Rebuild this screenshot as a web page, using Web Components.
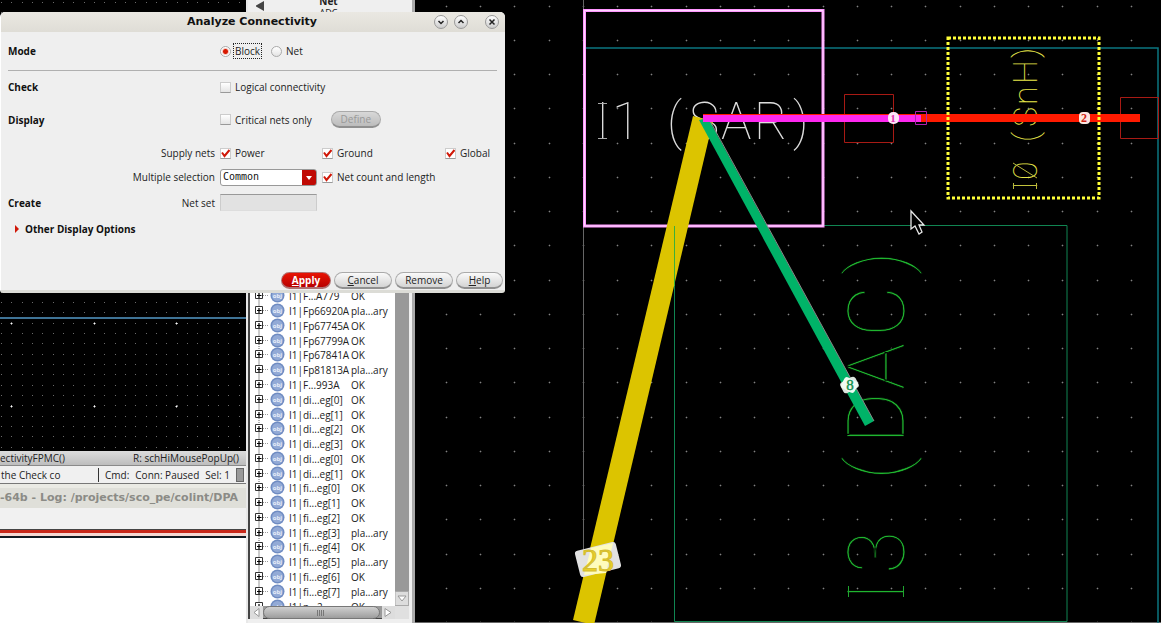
<!DOCTYPE html>
<html lang="en">
<head>
<meta charset="utf-8">
<title>Analyze Connectivity</title>
<style>
html, body { margin: 0; height: 100%; background: #000; }
body { font: 10px/14px "Open Sans", sans-serif; color: #222; overflow: hidden; }
</style>
</head>
<body>
<eda-desktop></eda-desktop>
<script>
const define = (name, html, setup) => {
  const template = document.createElement('template');
  template.innerHTML = html;
  customElements.define(name, class extends HTMLElement {
    constructor() {
      super();
      this.attachShadow({ mode: 'open' }).append(template.content.cloneNode(true));
    }
    connectedCallback() {
      if (setup && !this.ready) { this.ready = true; setup(this, this.shadowRoot); }
    }
  });
};

/* Square grid of dots as one path */
const dots = (x0, y0, step, cols, rows) => {
  let d = '';
  for (let j = 0; j < rows; j++)
    for (let i = 0; i < cols; i++)
      d += `M${Math.round(x0 + i * step)} ${Math.round(y0 + j * step)}h1v1h-1z`;
  return d;
};

/* Left: schematic editor */
define('schematic-pane', `
<style>
:host { display: block; background: #000; overflow: hidden; min-height: 0; }
svg { display: block; width: 100%; height: 100%; }
</style>
<svg aria-hidden="true">
  <path id="fine" fill="#6a6a6a"/>
  <path stroke="#3f7396" stroke-width="2" d="M0 318h4000"/>
  <path id="coarse" fill="#fff" stroke="#fff" stroke-width="1"/>
</svg>`, (el, root) => {
  root.getElementById('fine').setAttribute('d', dots(1, 2, 10.34, 24, 44));
  root.getElementById('coarse').setAttribute('d', dots(11, 323, 82.7, 3, 2));
});

define('mouse-bar', `
<style>
:host { display: flex; justify-content: space-between; height: 14px; padding-right: 7px;
  background: linear-gradient(#dcdcdc, #bdbdbd); border-bottom: 1px solid #8a8a8a; white-space: nowrap; }
</style>
<slot></slot>`);

define('status-bar', `
<style>
:host { display: flex; align-items: center; height: 17px; background: #f0f0f0; white-space: nowrap;
  border-bottom: 1px solid #777; }
.message { width: 97px; padding-left: 1px; }
.info { display: flex; gap: 6px; flex: 1; border-left: 1px solid #333; padding-left: 6px; }
.grip { width: 6px; height: 12px; background: #999; border: 1px solid #666; margin-right: 2px; }
</style>
<div class="message"><slot name="message"></slot></div>
<div class="info"><slot></slot></div>
<div class="grip"></div>`);

define('log-window', `
<style>
:host { display: flex; flex-direction: column; height: 139px; background: #fff; overflow: hidden; }
.title { height: 20px; margin-top: 4px; background: #dfdfd9; color: #8b8b86; white-space: nowrap;
  font: bold 11px/20px "DejaVu Sans", sans-serif; }
.gap { height: 4px; background: #eaeae4; margin-bottom: -4px; }
.menu { height: 21px; background: #f1f1f1; }
.rule { height: 3px; background: #c8281a; border-top: 1px solid #444; border-bottom: 3px solid #f6d8d2; }
.edge { height: 2px; background: #111a22; }
</style>
<div class="gap"></div><div class="title"><slot></slot></div>
<div class="menu"></div><div class="rule"></div><div class="edge"></div>`);

/* Middle: object browser */
define('object-icon', `
<style>
:host { display: inline-block; width: 36px; height: 14px; padding-left: 1px; vertical-align: top; }
svg { display: block; overflow: visible; }
text { font: bold 6px "Open Sans", sans-serif; fill: #e8eefa; text-anchor: middle; }
</style>
<svg width="36" height="14">
  <path d="M8 -4v22M12 6.500h6" stroke="#999" stroke-dasharray="1 1" fill="none"/>
  <path d="M4.500 2.500h7v7h-7z" fill="#fff" stroke="#333"/>
  <path d="M6 6.500h4.500M8 4v5" stroke="#000" stroke-width="1.200"/>
  <circle cx="26.500" cy="6.500" r="7" fill="#6f8cc2"/>
  <circle cx="26.500" cy="6.500" r="5.500" fill="#93aad6"/>
  <text x="26.500" y="9">obj</text>
</svg>`);

define('object-tree', `
<style>
:host { display: block; background: #fff; overflow: hidden; min-height: 0; }
table { border-collapse: collapse; width: 100%; height: 325px; table-layout: fixed; }
td { padding: 0; height: 14px; white-space: nowrap; vertical-align: middle; line-height: 14px; }
.icon { width: 39px; }
.name { width: 62px; }
</style>
<table aria-label="Objects"><tbody></tbody></table>`, (el, root) => {
  const P = 'pla...ary';
  const rows = [['F...A779'], ['Fp66920A', P], ['Fp67745A'], ['Fp67799A'], ['Fp67841A'], ['Fp81813A', P],
    ['F...993A'], ['di...eg[0]'], ['di...eg[1]'], ['di...eg[2]'], ['di...eg[3]'], ['di...eg[0]'], ['di...eg[1]'],
    ['fi...eg[0]'], ['fi...eg[1]'], ['fi...eg[2]'], ['fi...eg[3]', P], ['fi...eg[4]'], ['fi...eg[5]', P],
    ['fi...eg[6]'], ['fi...eg[7]', P], ['p...2']];
  root.querySelector('tbody').innerHTML = rows.map(([n, s = 'OK']) =>
    `<tr><td class="icon"><object-icon></object-icon></td><td class="name">I1|${n}</td><td>${s}</td></tr>`).join('');
});

define('object-browser', `
<style>
:host { display: flex; background: #efefef; overflow: hidden; border-left: 2px solid #e8e8e8; box-sizing: border-box; }
.main { flex: 1; display: flex; flex-direction: column; min-width: 0; }
.head { height: 24px; display: grid; grid-template-columns: 24px 1fr 24px; align-items: end; text-align: center;
  line-height: 12px; margin: -5px 0 270px; }
.head strong, .head span { display: block; }
.head span { font-size: 9px; }
.head svg { align-self: center; justify-self: end; margin-bottom: 2px; }
.body { flex: 1; display: grid; grid-template-columns: 1fr 14px; grid-template-rows: 1fr 13px; min-height: 0;
  border-left: 2px solid #444; }
.v { background: #999; display: flex; align-items: flex-end; }
.h { display: grid; grid-template-columns: 13px 1fr 15px; background: #999; border-bottom: 1px solid #444; }
.thumb { border-radius: 7px; background: linear-gradient(#d0d0d0, #9d9d9d); border: 1px solid #777; display: grid; place-items: center; }
svg { display: block; }
.corner { background: #e0e0e0; }
.foot { height: 4px; }
.edge { width: 3px; background: #aaa; margin-left: 3px; }
</style>
<div class="main">
  <div class="head">
    <svg width="16" height="10"><path d="M8 0v10L-1 5z" fill="#444"/></svg>
    <div><strong>Net</strong><span>ADC</span></div>
  </div>
  <div class="body">
    <object-tree></object-tree>
    <div class="v"><svg width="14" height="15"><path d="M0 .5h13.500v14H0z" fill="#ddd" stroke="#aaa"/><path d="M3 5h8l-4 5z" fill="#fff" stroke="#999"/></svg></div>
    <div class="h">
      <svg width="13" height="13"><path d="M0 0h13v13H0z" fill="#ddd"/><path d="M9 2.500v8l-5-4z" fill="#fff" stroke="#999"/></svg>
      <div class="thumb"><svg width="9" height="6"><path d="M.5 0v6M2.500 0v6M4.500 0v6M6.500 0v6" stroke="#777"/></svg></div>
      <svg width="15" height="13"><path d="M2 0h13v13H2z" fill="#ddd"/><path d="M5 2.500v8l6-4z" fill="#fff" stroke="#999"/></svg>
    </div>
    <div class="corner"></div>
  </div>
  <div class="foot"></div>
</div>
<div class="edge"></div>`);

/* Right: layout canvas with flight lines */
define('layout-canvas', `
<style>
:host { display: block; background: #000; overflow: hidden; min-width: 0; }
svg { display: block; width: 100%; height: 100%; }
.label { font-family: Roboto, sans-serif; font-weight: 100; }
.count { font-family: "Liberation Serif", serif; text-anchor: middle; }
</style>
<svg role="img" aria-label="Block connectivity"><g transform="translate(-415 0)">
  <path id="grid" fill="#909090" stroke="#808080" stroke-width=".6"/>
  <path d="M583.500 0v623M415 622.500h746" stroke="#666" fill="none"/>
  <path d="M585 48H1158V623" stroke="#0b7680" stroke-width="1.500" fill="none"/>
  <path d="M674.500 621.500V225.500H1067V621.500z" stroke="#108552" fill="none"/>
  <text class="label" font-size="51" fill="#dcdcdc" y="139" x="596 612 640 667 689 721 754 793">I1 (SAR)</text>
  <path d="M598 103.500h9M598 138.500h9" stroke="#aaa"/>
  <text class="label" font-size="34" fill="#e6e64a" transform="translate(1037 190) rotate(-90)" y="0" x="0 10 30 48 63 85 106 132">I0 (SnH)</text>
  <path d="M1013.500 183v6M1036.500 183v6M1013 163l24 15" stroke="#b8b83c"/>
  <text class="label" font-size="79" fill="#1fb52f" stroke="#000" stroke-width=".8" transform="translate(904 602) rotate(-90)" y="0" x="0 28 68 122 158 212 265 327">I3 (DAC)</text>
  <path d="M848.500 586v11M903.500 586v11" stroke="#1fa52f"/>
  <path d="M584.500 10.500H823V226H584.500z" stroke="#ff96ff" stroke-width="3" fill="none"/>
  <path d="M584.500 10.500H823V226H584.500z" stroke="#ffd8ff" fill="none"/>
  <path d="M844.500 94.500h49v48h-49zM1120.500 97.500h38v41h-38z" stroke="#a81a14" fill="none"/>
  <path d="M693 116L713 121L594 625L573 620z" fill="#dcc400"/>
  <path d="M699 120L708 118L874 421L865 426z" fill="#00b368"/>
  <path d="M709 119L874 421" stroke="#888"/>
  <path d="M674.500 226v60" stroke="#3ab03a"/>
  <path d="M703 114h437v8H703z" fill="#ff1a00"/>
  <path d="M703 115h218v7H703z" fill="#ff28f0"/>
  <path d="M915.500 111.500h11v13h-11z" stroke="#b020b0" fill="none"/>
  <path d="M948 38H1099V198H948z" stroke="#ffff38" stroke-width="3" stroke-dasharray="3 2" fill="none"/>
  <rect x="888" y="112" width="11" height="12" rx="5" fill="#fde4f8"/>
  <text class="count" x="893" y="122" font-size="11" font-weight="bold" fill="#e030b0">1</text>
  <rect x="1079" y="112" width="11" height="12" rx="4" fill="#fbe6e0"/>
  <text class="count" x="1084" y="122" font-size="12" font-weight="bold" fill="#d02010">2</text>
  <rect x="841" y="379" width="17" height="12" rx="3" transform="rotate(-28 849.500 385)" fill="#dde6e0"/>
  <rect x="842" y="379" width="15" height="12" rx="3" transform="rotate(28 849.500 385)" fill="#f0fbf3"/>
  <text class="count" x="850" y="390" font-size="15" fill="#109050" stroke="#109050" stroke-width=".4">8</text>
  <rect x="577" y="546" width="42" height="27" rx="3" transform="rotate(-14 598 559.500)" fill="#e2e2e2"/>
  <path d="M591 548L613 543L606 573L584 575z" fill="#fffcbc"/>
  <text class="count" x="598" y="571" font-size="32" fill="#e8cf28" stroke="#d4bc30" stroke-width="1">23</text>
  <path d="M911 211v18l4-3 4 8 3-2-3-7h5z" fill="#000" stroke="#e8e8e8" stroke-width="1.300"/>
</g></svg>`, (el, root) => {
  root.getElementById('grid').setAttribute('d', dots(411.6, 5.6, 34.25, 80, 60));
});

/* Dialog controls */
define('ui-toggle', `
<style>
:host { display: inline-flex; }
label { display: flex; align-items: center; gap: 3px; white-space: nowrap; }
input { appearance: none; width: 11px; height: 11px; margin: 0; box-sizing: border-box;
  background: linear-gradient(#fff, #e4e4e4); border: 1px solid #ccc; border-bottom-color: #999; outline: 0; }
input[type=radio] { border-radius: 50%; border-color: #aaa; }
input[type=radio]:checked { background: radial-gradient(circle, #d81800 0 2px, #f4c8c0 3px, #fff 4px); }
input[type=checkbox]:checked { background: no-repeat center/11px 11px
  url("data:image/svg+xml,%3Csvg xmlns='http://www.w3.org/2000/svg' viewBox='0 0 11 11'%3E%3Cpath d='M2 4.500L4.500 8L9.500 2' fill='none' stroke='%23d01808' stroke-width='2'/%3E%3C/svg%3E"), #fff; }
span { padding: 0 1px; border: 1px solid transparent; margin-left: -1px; }
:host([focused]) span { border: 1px dotted #222; }
</style>
<label><input><span><slot></slot></span></label>`, (el, root) => {
  const input = root.querySelector('input');
  input.type = el.getAttribute('type') || 'checkbox';
  input.checked = el.hasAttribute('checked');
});

define('ui-button', `
<style>
:host { display: block; }
button { width: 100%; height: 17px; padding: 0; border-radius: 9px; border: 1px solid #aaa; border-bottom: 2px solid #909090;
  background: linear-gradient(#fafafa, #d4d4d4); font: inherit; line-height: 13px; color: #222; display: block; }
:host([primary]) button { background: linear-gradient(#e81404, #b80000); border-color: #b07070; color: #fff; font-weight: bold; }
:host([disabled]) button { background: linear-gradient(#d8d8d8, #bcbcbc); color: #999; }
</style>
<button type="button"><slot></slot></button>`, (el, root) => {
  root.querySelector('button').disabled = el.hasAttribute('disabled');
});

define('title-button', `
<style>
:host { display: block; }
button { display: block; width: 14px; height: 14px; padding: 0; border: 1px solid #999; border-radius: 50%;
  background: linear-gradient(#fff, #ccc); }
svg { display: block; }
path { fill: none; stroke: #222; stroke-width: 1.500; }
</style>
<button type="button"><svg width="12" height="12"><path/></svg></button>`, (el, root) => {
  root.querySelector('button').setAttribute('aria-label', el.getAttribute('label'));
  root.querySelector('path').setAttribute('d', el.getAttribute('glyph'));
});

define('analyze-dialog', `
<style>
:host { display: flex; flex-direction: column; box-sizing: border-box; width: 505px; background: #efefef;
  border-radius: 5px 5px 3px 3px; overflow: hidden; border-bottom: 3px solid #dcdcd6; border-left: 1px solid #fff; }
header { display: flex; align-items: center; gap: 6px; height: 20px; padding-right: 6px; background: linear-gradient(#eae8e2, #dfddd6); }
h1 { flex: 1; margin: 0; padding-left: 75px; text-align: center; font: bold 11px/18px "DejaVu Sans", sans-serif; color: #111; }
title-button:last-child { margin-left: 11px; }
form { display: grid; grid-template-columns: 60px 142px 97px 118px auto; column-gap: 5px; align-items: center;
  grid-template-rows: 38px 1px 32px 33px 5px 24px 24px 27px 25px; padding: 0 8px 0 7px; }
h2 { grid-column: 1; margin: 0; font: bold 10px/14px "Open Sans", sans-serif; color: #111; }
h2.wide { grid-column: 1 / 4; display: flex; align-items: center; gap: 5px; padding-left: 6px; }
.field { grid-column: 2; text-align: right; }
.c3 { grid-column: 3; } .c4 { grid-column: 4; } .c5 { grid-column: 5; }
.supply { grid-row: 6; } .multiple { grid-row: 7; } .create { grid-row: 8; } h2.wide { grid-row: 9; }
.span { grid-column: 3 / 6; display: flex; align-items: center; }
.modes { gap: 9px; } .crit { gap: 17px; }
.crit ui-button { width: 50px; }
hr { grid-column: 1 / -1; width: 100%; border: 0; border-top: 1px solid #b0b0b0; margin: 0; }
select, .set { box-sizing: border-box; width: 97px; height: 17px; border: 1px solid #999; padding: 0 2px; margin: 0; }
select { appearance: none; border-radius: 3px; color: #111; font: 10px/14px "DejaVu Sans Mono", monospace;
  background: url("data:image/svg+xml,%3Csvg xmlns='http://www.w3.org/2000/svg' viewBox='0 0 14 15'%3E%3Cpath d='M0 0h14v15H0z' fill='%23c00a04'/%3E%3Cpath d='M4 6h6l-3 4z' fill='%23fff'/%3E%3C/svg%3E") no-repeat right/14px 15px, #fff; }
.set { background: #e2e2e2; border-color: #999 #ccc #ddd; }
footer { display: flex; justify-content: flex-end; gap: 3px; padding: 31px 2px 1px; }
.apply { width: 50px; } .std { width: 58px; } .help { width: 47px; }
</style>
<header>
  <h1>Analyze Connectivity</h1>
  <title-button label="Minimize" glyph="M3.500 5L6 7.500L8.500 5"></title-button>
  <title-button label="Maximize" glyph="M3.500 7L6 4.500L8.500 7"></title-button>
  <title-button label="Close" glyph="M3.500 3.500L8.500 8.500M8.500 3.500L3.500 8.500"></title-button>
</header>
<form>
  <h2>Mode</h2>
  <div class="span modes"><ui-toggle type="radio" checked focused>Block</ui-toggle><ui-toggle type="radio">Net</ui-toggle></div>
  <hr>
  <h2>Check</h2>
  <div class="span"><ui-toggle>Logical connectivity</ui-toggle></div>
  <h2>Display</h2>
  <div class="span crit"><ui-toggle>Critical nets only</ui-toggle><ui-button disabled>Define</ui-button></div>
  <div class="field supply">Supply nets</div>
  <ui-toggle class="c3 supply" checked>Power</ui-toggle>
  <ui-toggle class="c4 supply" checked>Ground</ui-toggle>
  <ui-toggle class="c5 supply" checked>Global</ui-toggle>
  <label class="field multiple" for="sel">Multiple selection</label>
  <select id="sel" class="c3 multiple"><option>Common</option></select>
  <ui-toggle class="c4 multiple" checked>Net count and length</ui-toggle>
  <h2 class="create">Create</h2>
  <label class="field create" for="set">Net set</label>
  <input id="set" class="c3 set create" type="text" disabled>
  <h2 class="wide"><svg width="6" height="8"><path d="M1 0l4 4-4 4z" fill="#d01808"/></svg>Other Display Options</h2>
</form>
<footer>
  <ui-button class="apply" primary><u>A</u>pply</ui-button>
  <ui-button class="std"><u>C</u>ancel</ui-button>
  <ui-button class="std">Remove</ui-button>
  <ui-button class="help"><u>H</u>elp</ui-button>
</footer>`);

define('eda-desktop', `
<style>
:host { display: grid; position: relative; grid-template-columns: 246px 169px 1fr; height: 100vh; overflow: hidden; background: #000; }
.left { display: grid; grid-template-rows: 1fr auto auto auto; min-width: 0; min-height: 0; overflow: hidden; }
object-browser, layout-canvas { min-height: 0; }
analyze-dialog { position: absolute; left: 0; top: 12px; }
</style>
<div class="left">
  <schematic-pane></schematic-pane>
  <mouse-bar><span>ectivityFPMC()</span><span>R: schHiMousePopUp()</span></mouse-bar>
  <status-bar><span slot="message">the Check co</span><span>Cmd:</span><span>Conn: Paused</span><span>Sel: 1</span></status-bar>
  <log-window>-64b - Log: /projects/sco_pe/colint/DPA</log-window>
</div>
<object-browser></object-browser>
<layout-canvas></layout-canvas>
<analyze-dialog></analyze-dialog>`);
</script>
</body>
</html>
